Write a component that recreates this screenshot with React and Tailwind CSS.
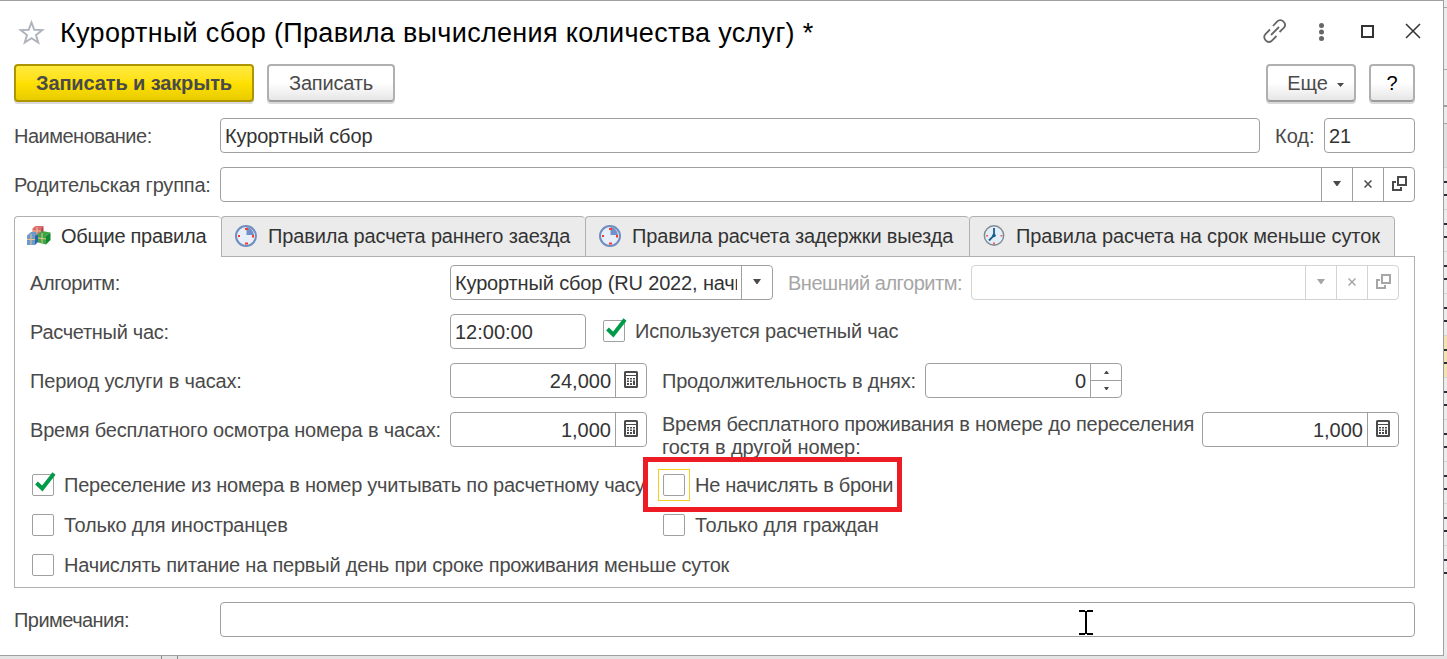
import React, { useState } from "react";
import clsx from "clsx";

const tabs = [
    { label: "Общие правила", width: "w-[207px]", pad: "pl-[11px]", icon: "cubes", spacing: "tracking-[-0.29px]" },
    { label: "Правила расчета раннего заезда", width: "w-[364px]", pad: "pl-[13px]", icon: "quarter", spacing: "tracking-[-0.15px]" },
    { label: "Правила расчета задержки выезда", width: "w-[384px]", pad: "pl-[13px]", icon: "quarter", spacing: "tracking-[-0.14px]" },
    { label: "Правила расчета на срок меньше суток", width: "w-[426px]", pad: "pl-[13px]", icon: "clock", spacing: "tracking-[-0.1px]" },
];

function CubesIcon() {
    return (
        <svg width="25" height="22" viewBox="0 0 25 22" className="shrink-0">
            <path d="M6.500 3.500L9.500 1h8l-2.500 2.500V10H6.500z" fill="#dd6a6c" />
            <path d="M15 3.500L17.500 1v7L15 10z" fill="#b8434b" />
            <path d="M1 10.500L5 7h6l-2 3.500V20H1z" fill="#6c9acb" />
            <path d="M9 10.500L12 7.500V17l-3 3z" fill="#2f669f" />
            <path d="M12 9l4-3 8.500 1.500L20 11v8.500l-8-2z" fill="#3fa548" />
            <path d="M20 11l4.500-3.500V15L20 19.500z" fill="#0f8a2c" />
            <path d="M11 2v8M7 6h8M5 9v11M1 14.500h8M16 8v10.500M12 13l8 1" stroke="#e6c590" strokeWidth="1" fill="none" />
        </svg>
    );
}

function QuarterClockIcon() {
    return (
        <svg width="22" height="22" viewBox="0 0 22 22" className="shrink-0">
            <circle cx="11" cy="11" r="10" fill="#e6eefc" stroke="#6e8ebf" strokeWidth="2" />
            <path d="M11.500 10V2a8.500 8.500 0 0 1 7.500 8z" fill="#7191c8" />
            <path d="M10 3h3v2h-3zM17 10h2v2.500h-2zM10 17.500h3v2h-3zM3 10h2v2H3z" fill="#fa3a25" />
        </svg>
    );
}

function ClockIcon() {
    return (
        <svg width="22" height="22" viewBox="0 0 22 22" className="shrink-0">
            <circle cx="11" cy="10.500" r="9.700" fill="#e3eef6" stroke="#7d8b96" strokeWidth="1.400" />
            <path d="M11 3v7.500L6 15.500" fill="none" stroke="#1d5b8b" strokeWidth="1.800" />
            <circle cx="11" cy="10.500" r="1.800" fill="#1d5b8b" />
            <path d="M3 10h2v1.500H3zM17.500 10h2v1.500h-2zM10 17.500h2v2h-2z" fill="#e8615a" />
        </svg>
    );
}

function TabIcon({ name }) {
    if (name === "cubes") return <CubesIcon />;
    if (name === "clock") return <ClockIcon />;
    return <QuarterClockIcon />;
}

function Calculator() {
    return (
        <svg width="14" height="17" viewBox="0 0 14 17" className="mb-[2px]">
            <rect x="1" y="1" width="12" height="15" rx="0.5" fill="none" stroke="#4a4a4a" strokeWidth="2" />
            <path d="M2 4.500h10" stroke="#4a4a4a" />
            <path d="M3 7h2v1.500H3zM6 7h2v1.500H6zM9 7h2v1.500H9zM3 9.500h2V11H3zM6 9.500h2V11H6zM9 9.500h2V14H9zM3 12h2v2H3zM6 12h2v2H6z" fill="#4a4a4a" />
        </svg>
    );
}

function Caret() {
    return (
        <svg width="8" height="5" viewBox="0 0 8 5" className="mb-[3px]">
            <path d="M0 0h8L4.500 5h-1z" fill="currentColor" />
        </svg>
    );
}

function Cross() {
    return (
        <svg width="8" height="8" viewBox="0 0 8 8" className="mb-px">
            <path d="M0.500 0.500l7 7M7.500 0.500l-7 7" stroke="currentColor" strokeWidth="1.500" />
        </svg>
    );
}

function OpenIcon() {
    return (
        <svg width="15" height="15" viewBox="0 0 15 15" className="mb-[2px] ml-px">
            <path d="M6 1h8v8H6z" fill="none" stroke="currentColor" strokeWidth="2" />
            <path d="M4 6H1v8h8v-3" fill="none" stroke="currentColor" strokeWidth="2" />
        </svg>
    );
}

function FieldButton({ disabled, children }) {
    return (
        <button
            className={clsx(
                "flex w-[31px] shrink-0 items-center justify-center border-l",
                disabled ? "border-[#d3d3d3] text-[#a6a6a6]" : "border-[#a0a0a0] text-[#4a4a4a]"
            )}
        >
            {children}
        </button>
    );
}

function Field({ value, width, align, disabled, spacing, children }) {
    return (
        <div
            className={clsx(
                "flex h-[35px] shrink-0 overflow-hidden rounded-[4px] border bg-white",
                disabled ? "border-[#d3d3d3]" : "border-[#a0a0a0]",
                width
            )}
        >
            <div className={clsx("mx-[4px] min-w-0 flex-1 overflow-hidden pt-px leading-[33px] whitespace-nowrap text-[#333]", align, spacing)}>
                {value}
            </div>
            {children}
        </div>
    );
}

function Checkbox({ label, defaultChecked, focused, spacing }) {
    const [checked, setChecked] = useState(!!defaultChecked);
    return (
        <label className="flex h-[22px] items-center gap-[10px]">
            <span
                onClick={() => setChecked(!checked)}
                className="relative size-[22px] shrink-0 rounded-[2px] border border-[#a0a0a0] bg-white"
            >
                {focused && <span className="absolute -inset-[6px] border border-[#f5d020]" />}
                {checked && (
                    <svg width="22" height="22" viewBox="0 0 22 22" className="absolute -top-[4px] left-px">
                        <path d="M2.500 12l5.800 5.500L20 2.500" fill="none" stroke="#009b48" strokeWidth="3.900" />
                    </svg>
                )}
            </span>
            <span className={clsx("whitespace-nowrap", spacing)}>{label}</span>
        </label>
    );
}

function TitleBar() {
    return (
        <div className="flex h-[63px] items-center pr-[22px] pl-[18px]">
            <svg width="27" height="25" viewBox="0 0 27 25" className="mb-px shrink-0">
                <path d="M13.500 2.500l2.800 7.300 8 .3-6.300 4.900 2.200 7.500-6.700-4.300-6.700 4.300 2.200-7.500-6.300-4.900 8-.3z" fill="none" stroke="#b0b5bd" strokeWidth="2" />
            </svg>
            <h1 className="ml-[15px] flex-1 pt-px text-[27px] tracking-[0.32px] whitespace-nowrap text-black">
                Курортный сбор (Правила вычисления количества услуг) *
            </h1>
            <svg width="24" height="24" viewBox="0 0 24 24" fill="none" stroke="#666" strokeWidth="1.800" className="mr-[32px] mb-[4px]">
                <path d="M10 7l4-4.300c2-2 4.500-2 6.500 0s2 4.500 0 6.500L16.500 13" />
                <path d="M7 10.500l-4.300 4.300c-2 2-2 4.500 0 6.500s4.500 2 6.500 0L13.500 17" />
                <path d="M8 16l8-8" />
            </svg>
            <svg width="6" height="18" viewBox="0 0 6 18" fill="#666" className="mr-[36px] mb-[2px]">
                <circle cx="2.500" cy="2.500" r="2.500" />
                <circle cx="2.500" cy="9" r="2.500" />
                <circle cx="2.500" cy="15.500" r="2.500" />
            </svg>
            <span className="mr-[31px] mb-[2px] h-[13px] w-[13px] border-2 border-[#333]" />
            <svg width="16" height="16" viewBox="0 0 16 16" className="mb-[3px]">
                <path d="M1 1l14 14M15 1L1 15" stroke="#333" strokeWidth="1.500" />
            </svg>
        </div>
    );
}

const plainButton = "flex h-[38px] items-center justify-center rounded-[4px] border-2 border-[#b0b0b0] border-b-[#9c9c9c] bg-linear-to-b from-white from-50% to-[#e6e6e6] shadow-[0_2px_0_#d9d9d9]";

function Toolbar() {
    return (
        <div className="flex h-[38px] pr-[28px] pl-[14px]">
            <button className="h-[38px] w-[240px] rounded-[4px] border-2 border-[#ad9500] bg-linear-to-b from-[#ffea3c] via-[#ffe000] to-[#e8cc00] font-bold tracking-[-0.12px] shadow-[0_2px_0_#d9d9d9]">
                Записать и закрыть
            </button>
            <button className={clsx(plainButton, "ml-[13px] w-[128px] tracking-[-0.2px]")}>Записать</button>
            <button className={clsx(plainButton, "mr-[13px] ml-auto w-[90px] gap-[9px] pl-[9px]")}>
                Еще
                <svg width="7" height="4" viewBox="0 0 7 4" className="mt-[3px]">
                    <path d="M0 0h7L3.500 4z" fill="#4a4a4a" />
                </svg>
            </button>
            <button className={clsx(plainButton, "w-[46px] text-black")}>?</button>
        </div>
    );
}

function GeneralRules() {
    return (
        <div className="-mt-px h-[332px] border border-[#b0b0b0] px-[15px] pt-[8px]">
            <div className="flex h-[35px] items-center">
                <span className="w-[420px] tracking-[-0.44px]">Алгоритм:</span>
                <Field value="Курортный сбор (RU 2022, начиная" width="w-[323px]" spacing="tracking-[-0.15px]">
                    <FieldButton><Caret /></FieldButton>
                </Field>
                <span className="ml-[15px] w-[183px] tracking-[-0.47px] whitespace-nowrap text-[#a6a6a6]">Внешний алгоритм:</span>
                <Field width="w-[428px]" disabled>
                    <FieldButton disabled><Caret /></FieldButton>
                    <FieldButton disabled><Cross /></FieldButton>
                    <FieldButton disabled><OpenIcon /></FieldButton>
                </Field>
            </div>
            <div className="mt-[14px] flex h-[35px] items-center">
                <span className="w-[420px] tracking-[-0.3px]">Расчетный час:</span>
                <Field value="12:00:00" width="w-[136px]" />
                <div className="mb-[2px] ml-[17px]">
                    <Checkbox label="Используется расчетный час" defaultChecked spacing="tracking-[-0.19px]" />
                </div>
            </div>
            <div className="mt-[14px] flex h-[35px] items-center">
                <span className="w-[420px] tracking-[-0.18px]">Период услуги в часах:</span>
                <Field value="24,000" width="w-[197px]" align="text-right">
                    <FieldButton><Calculator /></FieldButton>
                </Field>
                <span className="ml-[15px] w-[263px] tracking-[-0.2px] whitespace-nowrap">Продолжительность в днях:</span>
                <Field value="0" width="w-[197px]" align="text-right">
                    <div className="flex w-[31px] flex-col border-l border-[#a0a0a0]">
                        <button className="flex h-[17px] items-center justify-center border-b border-[#a0a0a0]">
                            <svg width="5" height="3" viewBox="0 0 5 3" className="mt-px"><path d="M0 3h5L3 0H2z" fill="#4a4a4a" /></svg>
                        </button>
                        <button className="flex h-[14px] items-center justify-center">
                            <svg width="5" height="3" viewBox="0 0 5 3"><path d="M0 0h5L3 3H2z" fill="#4a4a4a" /></svg>
                        </button>
                    </div>
                </Field>
            </div>
            <div className="mt-[14px] flex h-[35px] items-center">
                <span className="w-[420px] tracking-[-0.17px] whitespace-nowrap">Время бесплатного осмотра номера в часах:</span>
                <Field value="1,000" width="w-[197px]" align="text-right">
                    <FieldButton><Calculator /></FieldButton>
                </Field>
                <span className="mt-[13px] ml-[15px] w-[540px] leading-[23px] tracking-[-0.22px] whitespace-nowrap">
                    Время бесплатного проживания в номере до переселения
                    <br />
                    <span className="tracking-[-0.1px]">гостя в другой номер:</span>
                </span>
                <Field value="1,000" width="w-[197px]" align="text-right">
                    <FieldButton><Calculator /></FieldButton>
                </Field>
            </div>
            <div className="mt-[27px] grid grid-cols-[631px_1fr] gap-y-[18px] pl-[2px]">
                <Checkbox label="Переселение из номера в номер учитывать по расчетному часу" defaultChecked spacing="tracking-[-0.24px]" />
                <div className="relative">
                    <Checkbox label="Не начислять в брони" focused spacing="tracking-[-0.3px]" />
                    {/* Highlight frame */}
                    <div className="pointer-events-none absolute -top-[17px] -left-[20px] h-[55px] w-[259px] border-[5px] border-[#ed1c24]" />
                </div>
                <Checkbox label="Только для иностранцев" spacing="tracking-[-0.18px]" />
                <Checkbox label="Только для граждан" spacing="tracking-[-0.1px]" />
                <Checkbox label="Начислять питание на первый день при сроке проживания меньше суток" spacing="tracking-[-0.22px]" />
            </div>
        </div>
    );
}

// Strip of the parent list window
function Backdrop() {
    return (
        <div className="h-full w-[3px] shrink-0 overflow-hidden bg-[#ececec]">
            <div className="mt-[7px] h-[63px] border-y border-[#a8a8a8]" />
            <div className="mt-[35px] h-[18px] border-t-2 border-[#a0a0a0]" />
            <div className="h-[44px] border-t border-[#a8a8a8] bg-[#e0e0e0]" />
            {Array.from({ length: 10 }, (_, i) => (
                <div key={i} className={clsx("h-[42px] border-t border-[#d3d3d3] pt-[13px]", i === 4 && "bg-[#f3e3ae]")}>
                    <div className="h-[15px] border-y-2 border-[#2b2b33]" />
                </div>
            ))}
        </div>
    );
}

export default function App() {
    const [active, setActive] = useState(0);

    return (
        <div className="flex h-[659px] w-[1447px] flex-col overflow-hidden bg-[#ececec] font-['Liberation_Sans',Arial,sans-serif] text-[20px] leading-[24px] text-[#4a4a4a]">
            <div className="flex h-[656px]">
                <div className="relative w-[1444px] shrink-0 border-t border-r border-b border-[#a0a0a0] bg-white">
                    <TitleBar />
                    <Toolbar />

                    <div className="mt-[16px] flex h-[35px] items-center px-[14px]">
                        <span className="w-[206px] tracking-[-0.5px]">Наименование:</span>
                        <Field value="Курортный сбор" width="w-[1040px]" spacing="tracking-[-0.14px]" />
                        <span className="ml-[15px] w-[49px]">Код:</span>
                        <Field value="21" width="w-[91px]" />
                    </div>
                    <div className="mt-[14px] flex h-[35px] items-center px-[14px]">
                        <span className="w-[206px] tracking-[-0.2px] whitespace-nowrap">Родительская группа:</span>
                        <Field width="w-[1195px]">
                            <FieldButton><Caret /></FieldButton>
                            <FieldButton><Cross /></FieldButton>
                            <FieldButton><OpenIcon /></FieldButton>
                        </Field>
                    </div>

                    <div className="mt-[14px] pr-[28px] pl-[14px]">
                        <div className="relative z-10 flex h-[41px]">
                            {tabs.map((tab, i) => (
                                <button
                                    key={tab.label}
                                    onClick={() => setActive(i)}
                                    className={clsx(
                                        "flex items-center rounded-t-[4px] border-t border-l border-[#b0b0b0] whitespace-nowrap text-[#333]",
                                        i === tabs.length - 1 && "border-r",
                                        i === active ? "gap-[10px] bg-white pb-[2px]" : "gap-[11px] border-b bg-[#ebebeb] pb-px",
                                        tab.width,
                                        tab.pad,
                                        tab.spacing
                                    )}
                                >
                                    <TabIcon name={tab.icon} />
                                    {tab.label}
                                </button>
                            ))}
                        </div>
                        <GeneralRules />
                    </div>

                    <div className="mt-[14px] flex h-[35px] items-center px-[14px]">
                        <span className="w-[206px] tracking-[-0.55px]">Примечания:</span>
                        <Field width="w-[1195px]" />
                    </div>

                    {/* Text cursor */}
                    <svg width="14" height="25" viewBox="0 0 14 25" className="absolute top-[609px] left-[1079px]">
                        <path d="M0 1h6M8 1h6M7 1v23M0 24h6M8 24h6" stroke="#000" strokeWidth="2" fill="none" />
                    </svg>
                </div>
                <Backdrop />
            </div>
            <div className="flex h-[3px] bg-[#e4e4e4] pl-[161px]">
                <div className="w-[17px] border-x border-[#888]" />
            </div>
        </div>
    );
}
